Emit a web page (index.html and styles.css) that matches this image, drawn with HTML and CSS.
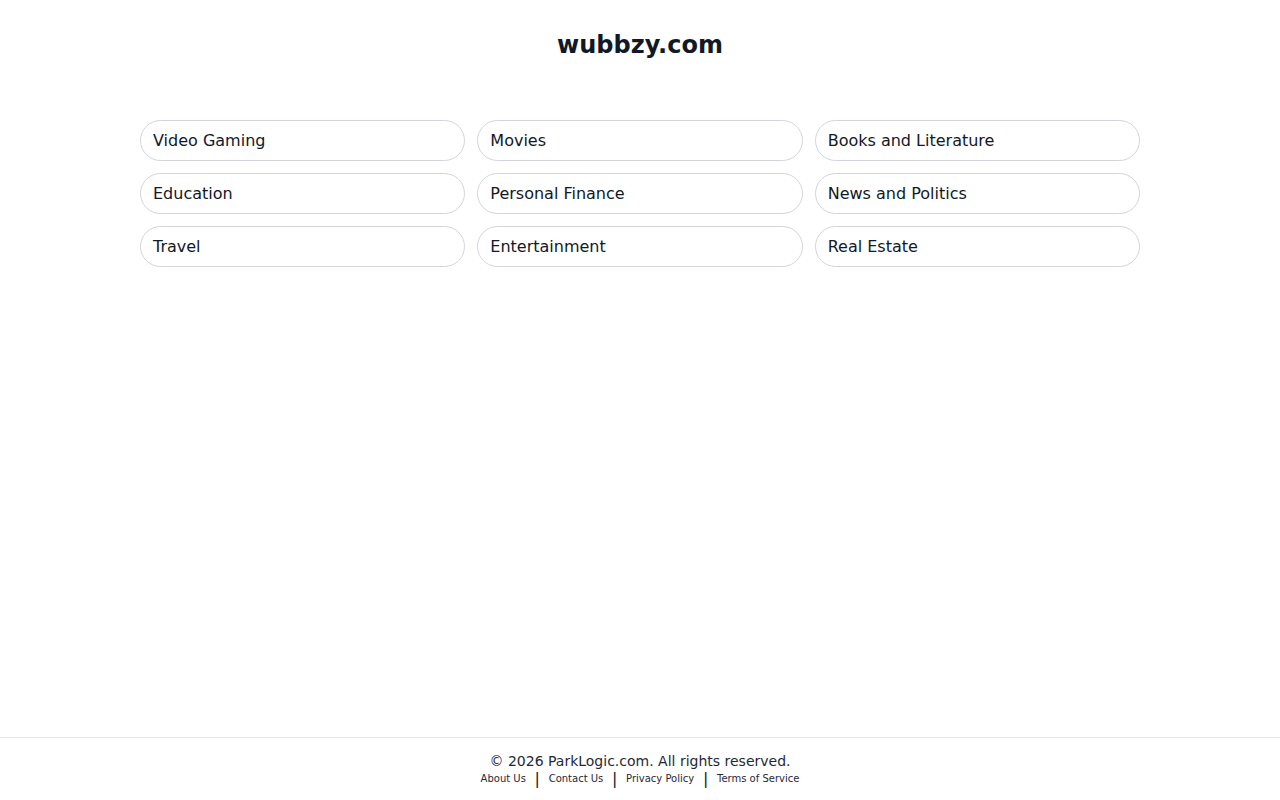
FILE: index.html
```html
<!DOCTYPE html>
<html>
<head>
    <meta charset="UTF-8">
    <title>wubbzy.com</title>
    <link rel="stylesheet" href="styles.css">
</head>
<body>
    <div class="page">
        <header class="top">
            <h1 class="domain">wubbzy.com</h1>
        </header>
        <main class="topics">
            <a class="topic" href="#">Video Gaming</a>
            <a class="topic" href="#">Movies</a>
            <a class="topic" href="#">Books and Literature</a>
            <a class="topic" href="#">Education</a>
            <a class="topic" href="#">Personal Finance</a>
            <a class="topic" href="#">News and Politics</a>
            <a class="topic" href="#">Travel</a>
            <a class="topic" href="#">Entertainment</a>
            <a class="topic" href="#">Real Estate</a>
        </main>
        <footer class="foot">
            <div class="copy">&copy; 2026 ParkLogic.com. All rights reserved.</div>
            <div class="links">
                <a href="#">About Us</a>
                <span class="sep">|</span>
                <a href="#">Contact Us</a>
                <span class="sep">|</span>
                <a href="#">Privacy Policy</a>
                <span class="sep">|</span>
                <a href="#">Terms of Service</a>
            </div>
        </footer>
    </div>
</body>
</html>
```

FILE: styles.css
```css
body {
    margin: 0;
    background: #ffffff;
    color: #111827;
    font-family: "DejaVu Sans", sans-serif;
}
.page {
    min-height: 100vh;
    display: flex;
    flex-direction: column;
}
.top {
    padding-top: 31px;
    text-align: center;
}
.domain {
    margin: 0;
    font-size: 24px;
    line-height: 28px;
    font-weight: bold;
    color: #111827;
}
.topics {
    flex: 1;
    width: 1000px;
    margin: 61px auto 0;
    display: grid;
    grid-template-columns: repeat(3, 1fr);
    grid-auto-rows: 41px;
    gap: 12px;
    align-content: start;
}
.topic {
    display: flex;
    align-items: center;
    padding: 0 12px;
    border: 1px solid #d1d5db;
    border-radius: 9999px;
    color: #111827;
    text-decoration: none;
    font-size: 16px;
}
.foot {
    border-top: 1px solid #e5e7eb;
    padding: 13px 0 14px;
    text-align: center;
}
.copy {
    font-size: 14px;
    line-height: 20px;
    color: #1f2937;
}
.links {
    display: flex;
    justify-content: center;
    align-items: center;
    gap: 8.7px;
    margin-top: 1px;
    line-height: 14px;
}
.links a {
    font-size: 10px;
    color: #1f2937;
    text-decoration: none;
}
.sep {
    font-size: 16px;
    color: #111827;
}
```
